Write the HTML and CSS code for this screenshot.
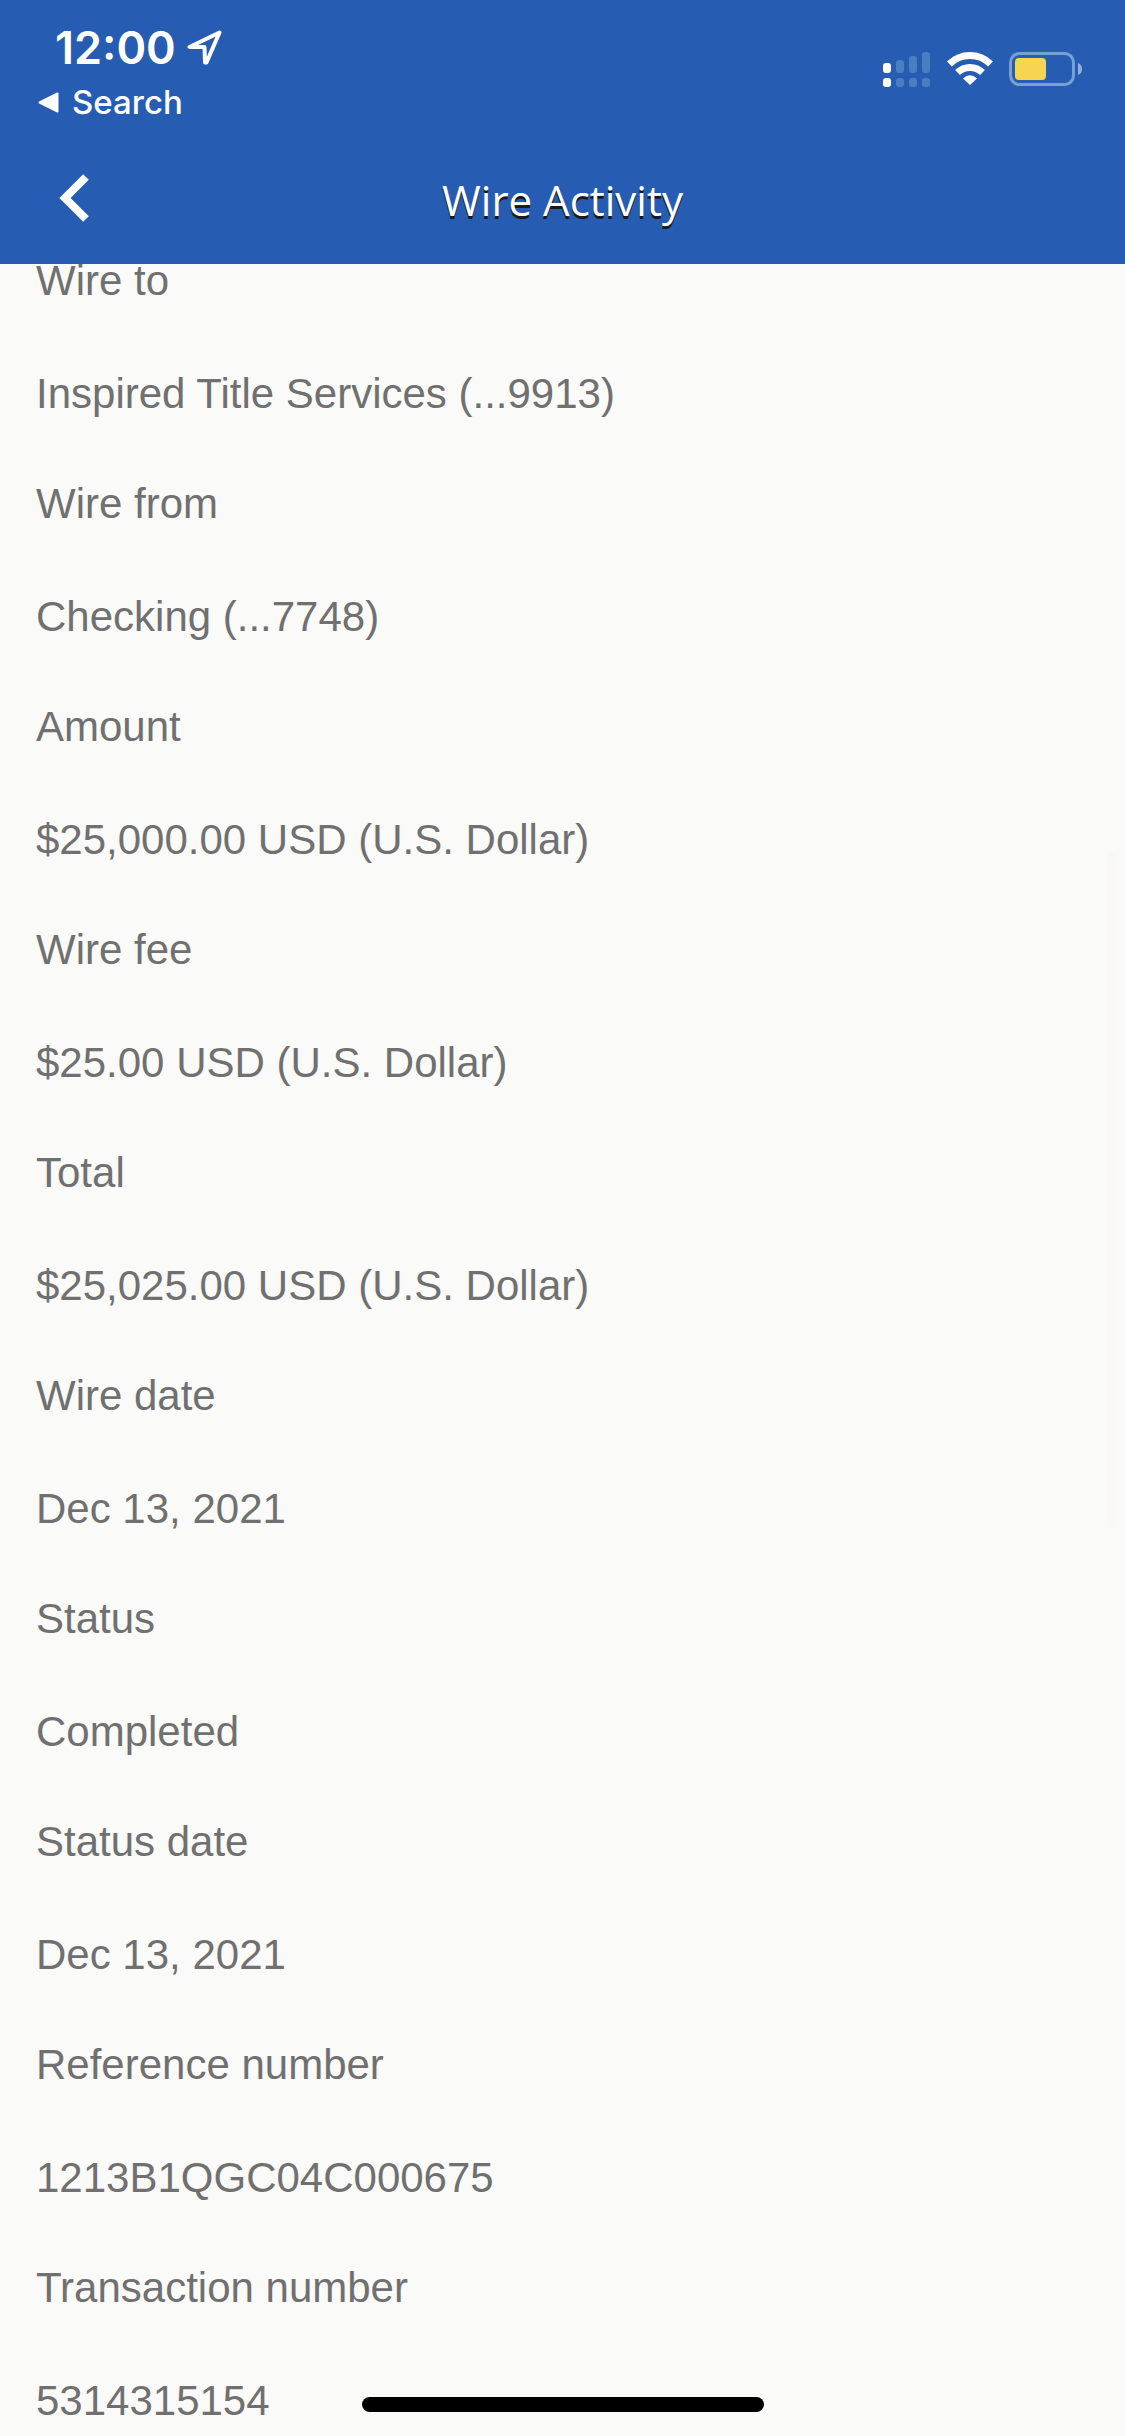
FILE: index.html
```html
<!DOCTYPE html>
<html lang="en">
    <head>
        <meta charset="utf-8">
        <title>Wire Activity</title>
        <link rel="stylesheet" href="styles.css">
    </head>
    <body>
        <header class="header">
            <div class="status-bar">
                <div class="status-left">
                    <div class="clock">
                        <span class="time">12:00</span>
                        <svg class="location" width="36" height="36" viewBox="0 0 36 36">
                            <path d="M32.5 2.5 L2.500 17 L17.5 17 L18 32.500 L19.5 32.5 Z" fill="none" stroke="#fff" stroke-width="4" stroke-linejoin="round"/>
                        </svg>
                    </div>
                    <a class="back-app" href="#">
                        <svg width="21" height="21" viewBox="0 0 21 21">
                            <path d="M1.5 10.5 L19.5 1.5 V19.5 Z" fill="#fff" stroke="#fff" stroke-width="2" stroke-linejoin="round"/>
                        </svg>
                        Search
                    </a>
                </div>
                <div class="status-icons">
                    <svg width="48" height="36" viewBox="0 0 48 36">
                        <g fill="#fff">
                            <rect x="0" y="11" width="8" height="10" rx="3"/>
                            <rect x="0" y="26" width="8" height="9" rx="3"/>
                        </g>
                        <g fill="#4a7dc1">
                            <rect x="13" y="8" width="8" height="13" rx="3"/>
                            <rect x="26" y="4" width="8" height="17" rx="3"/>
                            <rect x="39" y="0" width="8" height="21" rx="3"/>
                            <rect x="13" y="26" width="8" height="9" rx="3"/>
                            <rect x="26" y="26" width="8" height="9" rx="3"/>
                            <rect x="39" y="26" width="8" height="9" rx="3"/>
                        </g>
                    </svg>
                    <svg width="46" height="34" viewBox="0 0 46 34">
                        <g fill="none" stroke="#fff">
                            <path d="M2.5 12 A29 29 0 0 1 43.5 12" stroke-width="7"/>
                            <path d="M10.5 20.5 A18 18 0 0 1 35.5 20.5" stroke-width="7"/>
                        </g>
                        <path d="M23 33 L16 26.5 Q23 20 30 26.5 Z" fill="#fff"/>
                    </svg>
                    <svg width="73" height="34" viewBox="0 0 73 34">
                        <rect x="1.5" y="1.5" width="63" height="31" rx="9" fill="none" stroke="#77a0d5" stroke-width="3"/>
                        <rect x="6" y="6" width="31" height="22" rx="4" fill="#f7d550"/>
                        <path d="M69 11 Q73 12.5 73 17 Q73 21.5 69 23 Z" fill="#8fb1de"/>
                    </svg>
                </div>
            </div>
            <div class="nav-bar">
                <button class="back" aria-label="Back">
                    <svg width="32" height="50" viewBox="0 0 32 50">
                        <path d="M29 4 L8 25 L29 46" fill="none" stroke="#fff" stroke-width="8"/>
                    </svg>
                </button>
                <h1 class="title">Wire Activity</h1>
            </div>
        </header>
        <dl class="details">
            <dt>Wire to</dt>
            <dd>Inspired Title Services (...9913)</dd>
            <dt>Wire from</dt>
            <dd>Checking (...7748)</dd>
            <dt>Amount</dt>
            <dd>$25,000.00 USD (U.S. Dollar)</dd>
            <dt>Wire fee</dt>
            <dd>$25.00 USD (U.S. Dollar)</dd>
            <dt>Total</dt>
            <dd>$25,025.00 USD (U.S. Dollar)</dd>
            <dt>Wire date</dt>
            <dd>Dec 13, 2021</dd>
            <dt>Status</dt>
            <dd>Completed</dd>
            <dt>Status date</dt>
            <dd>Dec 13, 2021</dd>
            <dt>Reference number</dt>
            <dd>1213B1QGC04C000675</dd>
            <dt>Transaction number</dt>
            <dd>5314315154</dd>
        </dl>
        <div class="scrollbar"></div>
        <div class="home-indicator"></div>
    </body>
</html>
```
FILE: styles.css
```css
* {
    box-sizing: border-box;
}
body {
    margin: 0;
    background: #fafaf8;
    color: #707070;
    font-family: "Liberation Sans", Arial, sans-serif;
}
.header {
    background: #265db2;
    color: #fff;
}
.status-bar {
    display: flex;
    justify-content: space-between;
    height: 136px;
    padding: 24px 43px 0 38px;
    font-family: Inter, sans-serif;
}
.clock {
    display: flex;
    align-items: center;
    gap: 11px;
    height: 48px;
    padding-left: 17px;
}
.time {
    font-size: 45px;
    font-weight: 600;
    line-height: 48px;
}
.back-app {
    display: flex;
    align-items: center;
    gap: 13px;
    margin-top: 10px;
    color: #fff;
    font-size: 33px;
    font-weight: 500;
    line-height: 40px;
    text-decoration: none;
}
.status-icons {
    display: flex;
    align-items: flex-start;
    gap: 16px;
    padding-top: 28px;
}
.nav-bar {
    display: grid;
    grid-template-columns: 120px 1fr 120px;
    align-items: center;
    height: 128px;
}
.back {
    justify-self: start;
    margin: 0 0 4px 57px;
    padding: 0;
    border: 0;
    background: none;
}
.back svg {
    display: block;
}
.title {
    margin: 0;
    font-family: "Open Sans", sans-serif;
    font-size: 42px;
    font-weight: 400;
    line-height: 48px;
    text-align: center;
    text-shadow: 0 3px 0 #1a1a1a;
}
.details {
    margin: 0;
    padding: 0 36px;
    font-size: 42px;
    line-height: 34px;
}
.details dt {
    margin-bottom: 79px;
}
.details dd {
    margin: 0 0 76px;
}
.details dd:last-child {
    margin-bottom: 0;
}
.scrollbar {
    position: fixed;
    top: 853px;
    right: 9px;
    width: 9px;
    height: 675px;
    border-radius: 5px;
    background: #faf8f6;
}
.home-indicator {
    position: fixed;
    bottom: 24px;
    left: 50%;
    width: 402px;
    height: 15px;
    margin-left: -201px;
    border-radius: 8px;
    background: #000;
}
```
